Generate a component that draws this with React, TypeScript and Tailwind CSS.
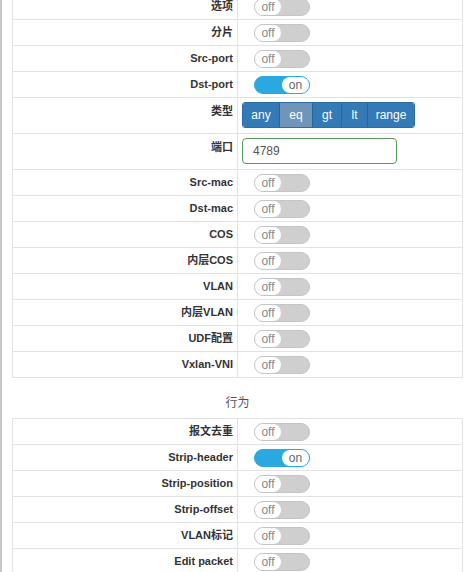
import React from 'react';

type Row =
  | { label: string; kind: 'toggle'; on?: boolean }
  | { label: string; kind: 'type' }
  | { label: string; kind: 'port' };

const matchRows: Row[] = [
  { label: '选项', kind: 'toggle' },
  { label: '分片', kind: 'toggle' },
  { label: 'Src-port', kind: 'toggle' },
  { label: 'Dst-port', kind: 'toggle', on: true },
  { label: '类型', kind: 'type' },
  { label: '端口', kind: 'port' },
  { label: 'Src-mac', kind: 'toggle' },
  { label: 'Dst-mac', kind: 'toggle' },
  { label: 'COS', kind: 'toggle' },
  { label: '内层COS', kind: 'toggle' },
  { label: 'VLAN', kind: 'toggle' },
  { label: '内层VLAN', kind: 'toggle' },
  { label: 'UDF配置', kind: 'toggle' },
  { label: 'Vxlan-VNI', kind: 'toggle' },
];

const actionRows: Row[] = [
  { label: '报文去重', kind: 'toggle' },
  { label: 'Strip-header', kind: 'toggle', on: true },
  { label: 'Strip-position', kind: 'toggle' },
  { label: 'Strip-offset', kind: 'toggle' },
  { label: 'VLAN标记', kind: 'toggle' },
  { label: 'Edit packet', kind: 'toggle' },
];

// widths include the 1px divider on the left of each button
const typeButtons = [
  { text: 'any', w: 'w-[36px]' },
  { text: 'eq', w: 'w-[33px]', active: true },
  { text: 'gt', w: 'w-[29px]' },
  { text: 'lt', w: 'w-[26px]' },
  { text: 'range', w: 'w-[47px]' },
];

function Toggle({ on }: { on?: boolean }) {
  if (on) {
    return (
      <div className="ml-[16px] flex h-[18px] w-[56px] items-center justify-end rounded-full border border-[#2aa9e0] bg-[#2aa9e0]">
        <div className="flex h-[16px] w-[27px] items-center justify-center rounded-full bg-white text-[12px] leading-none text-[#666]">
          on
        </div>
      </div>
    );
  }
  return (
    <div className="ml-[16px] flex h-[18px] w-[56px] items-center rounded-full border border-[#c4c4c4] bg-[#cfcfcf]">
      <div className="flex h-[16px] w-[26px] items-center justify-center rounded-full bg-white text-[12px] leading-none text-[#888]">
        off
      </div>
    </div>
  );
}

function TypeGroup() {
  return (
    <div className="flex h-[26px] w-fit overflow-hidden rounded-[3px] border border-[#2e6da4]">
      {typeButtons.map((b, i) => (
        <div
          key={b.text}
          className={`flex items-center justify-center text-[12px] text-white ${b.w} ${
            b.active ? 'bg-[#6f95ba]' : 'bg-[#337ab7]'
          } ${i > 0 ? 'border-l border-[#2a6496]' : ''}`}
        >
          {b.text}
        </div>
      ))}
    </div>
  );
}

function TableRow({ row }: { row: Row }) {
  if (row.kind === 'type' || row.kind === 'port') {
    return (
      <div className="grid grid-cols-[225px_1fr] border-b border-[#e2e2e2]">
        <div className="border-r border-[#e2e2e2] pr-[4px] pt-[5px] text-right text-[11px] font-bold leading-[17px] text-[#333]">
          {row.label}
        </div>
        <div className="pb-[5px] pl-[4px] pt-[4px]">
          {row.kind === 'type' ? (
            <TypeGroup />
          ) : (
            <div className="flex h-[26px] w-[155px] items-center rounded-[4px] border border-[#5a9a5a] pl-[10px] text-[12px] text-[#555]">
              4789
            </div>
          )}
        </div>
      </div>
    );
  }
  return (
    <div className="grid h-[26px] grid-cols-[225px_1fr] border-b border-[#e2e2e2]">
      <div className="flex items-center justify-end border-r border-[#e2e2e2] pr-[4px] text-[11px] font-bold text-[#333]">
        {row.label}
      </div>
      <div className="flex items-center">
        <Toggle on={row.on} />
      </div>
    </div>
  );
}

function Table({ rows, className = '' }: { rows: Row[]; className?: string }) {
  return (
    <div className={`border border-b-0 border-[#e2e2e2] ${className}`}>
      {rows.map((r) => (
        <TableRow key={r.label} row={r} />
      ))}
    </div>
  );
}

export default function App() {
  return (
    <div
      className="h-[572px] overflow-hidden border-l-2 border-[#c6c6c6] bg-white pl-[10px] pr-[1px]"
      style={{ fontFamily: '"Liberation Sans", Arial, "Noto Sans CJK SC", sans-serif' }}
    >
      <Table rows={matchRows} className="-mt-[7px]" />
      <div className="h-[40px] pt-[17px] text-center text-[12px] leading-[17px] text-[#555]">行为</div>
      <Table rows={actionRows} />
    </div>
  );
}
